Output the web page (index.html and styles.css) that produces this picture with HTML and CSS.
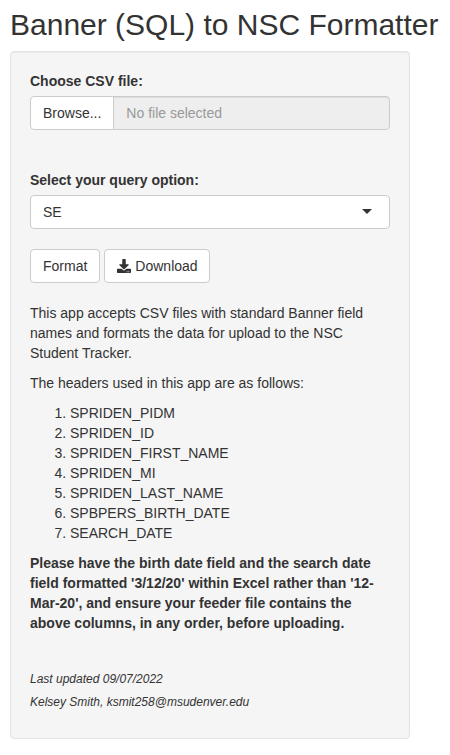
FILE: index.html
```html
<!DOCTYPE html>
<html lang="en">
<head>
<meta charset="utf-8">
<title>Banner (SQL) to NSC Formatter</title>
<link rel="stylesheet" href="styles.css">
</head>
<body>
<h2>Banner (SQL) to NSC Formatter</h2>
<form class="well">
  <div class="form-group file-group">
    <label>Choose CSV file:</label>
    <div class="input-group">
      <span class="btn browse">Browse...</span>
      <div class="file-name">No file selected</div>
    </div>
  </div>
  <div class="form-group">
    <label>Select your query option:</label>
    <div class="select"><span>SE</span><span class="caret"></span></div>
  </div>
  <div class="actions">
    <button class="btn" type="button">Format</button>
    <a class="btn download"><svg class="icon" viewBox="0 0 512 512" aria-hidden="true"><path d="M216 0h80c13.300 0 24 10.700 24 24v168h87.700c17.800 0 26.700 21.500 14.100 34.100L269.700 378.300c-7.500 7.500-19.800 7.500-27.300 0L90.100 226.100c-12.600-12.600-3.700-34.100 14.100-34.100H192V24c0-13.300 10.700-24 24-24zm296 376v112c0 13.300-10.700 24-24 24H24c-13.300 0-24-10.700-24-24V376c0-13.300 10.700-24 24-24h146.700l49 49c20.100 20.100 52.500 20.100 72.600 0l49-49H488c13.300 0 24 10.700 24 24zm-124 88c0-11-9-20-20-20s-20 9-20 20 9 20 20 20 20-9 20-20zm64 0c0-11-9-20-20-20s-20 9-20 20 9 20 20 20 20-9 20-20z"/></svg><span>Download</span></a>
  </div>
  <p>This app accepts CSV files with standard Banner field names and formats the data for upload to the NSC Student Tracker.</p>
  <p>The headers used in this app are as follows:</p>
  <ol>
    <li>SPRIDEN_PIDM</li>
    <li>SPRIDEN_ID</li>
    <li>SPRIDEN_FIRST_NAME</li>
    <li>SPRIDEN_MI</li>
    <li>SPRIDEN_LAST_NAME</li>
    <li>SPBPERS_BIRTH_DATE</li>
    <li>SEARCH_DATE</li>
  </ol>
  <p class="strong">Please have the birth date field and the search date field formatted '3/12/20' within Excel rather than '12-Mar-20', and ensure your feeder file contains the above columns, in any order, before uploading.</p>
  <div class="credits">
    <div>Last updated 09/07/2022</div>
    <div>Kelsey Smith, ksmit258@msudenver.edu</div>
  </div>
</form>
</body>
</html>
```

FILE: styles.css
```css
* { box-sizing: border-box; }
body {
  margin: 0;
  padding: 0 10px;
  background: #fff;
  color: #333;
  font: 14px/20px "Liberation Sans", Arial, sans-serif;
}
h2 {
  margin: 8px 0 10px;
  font-size: 30px;
  line-height: 33px;
  font-weight: 500;
  white-space: nowrap;
}
.well {
  width: 400px;
  height: 688px;
  padding: 19px;
  background: #f5f5f5;
  border: 1px solid #e3e3e3;
  border-radius: 4px;
  box-shadow: inset 0 1px 1px rgba(0, 0, 0, 0.05);
}
.form-group { margin-bottom: 20px; }
.file-group { margin-bottom: 40px; }
label { display: block; margin-bottom: 5px; font-weight: 700; }
.input-group { display: flex; }
.btn {
  display: inline-flex;
  align-items: center;
  height: 34px;
  padding: 0 12px;
  background: #fff;
  border: 1px solid #ccc;
  border-radius: 4px;
  color: #333;
  font: inherit;
}
.browse { border-radius: 4px 0 0 4px; }
.download { width: 106px; }
.file-name {
  flex: 1;
  height: 34px;
  margin-left: -1px;
  padding: 6px 12px;
  background: #eee;
  border: 1px solid #ccc;
  border-radius: 0 4px 4px 0;
  box-shadow: inset 0 1px 1px rgba(0, 0, 0, 0.075);
  color: #999;
}
.select {
  display: flex;
  align-items: center;
  justify-content: space-between;
  height: 34px;
  padding: 0 17px 0 12px;
  background: #fff;
  border: 1px solid #ccc;
  border-radius: 4px;
}
.caret {
  margin-bottom: 1px;
  border: 5px solid transparent;
  border-top-color: #333;
  border-bottom: 0;
}
.actions { display: flex; gap: 4px; margin-bottom: 20px; }
.icon { flex: none; width: 14px; height: 14px; margin-right: 4px; fill: #333; }
p { margin: 0 0 10px; }
ol { margin: 0 0 10px; padding-left: 40px; }
.strong { font-weight: 700; }
.credits { margin-top: 35px; font-size: 12px; line-height: 23px; font-style: italic; }
```
